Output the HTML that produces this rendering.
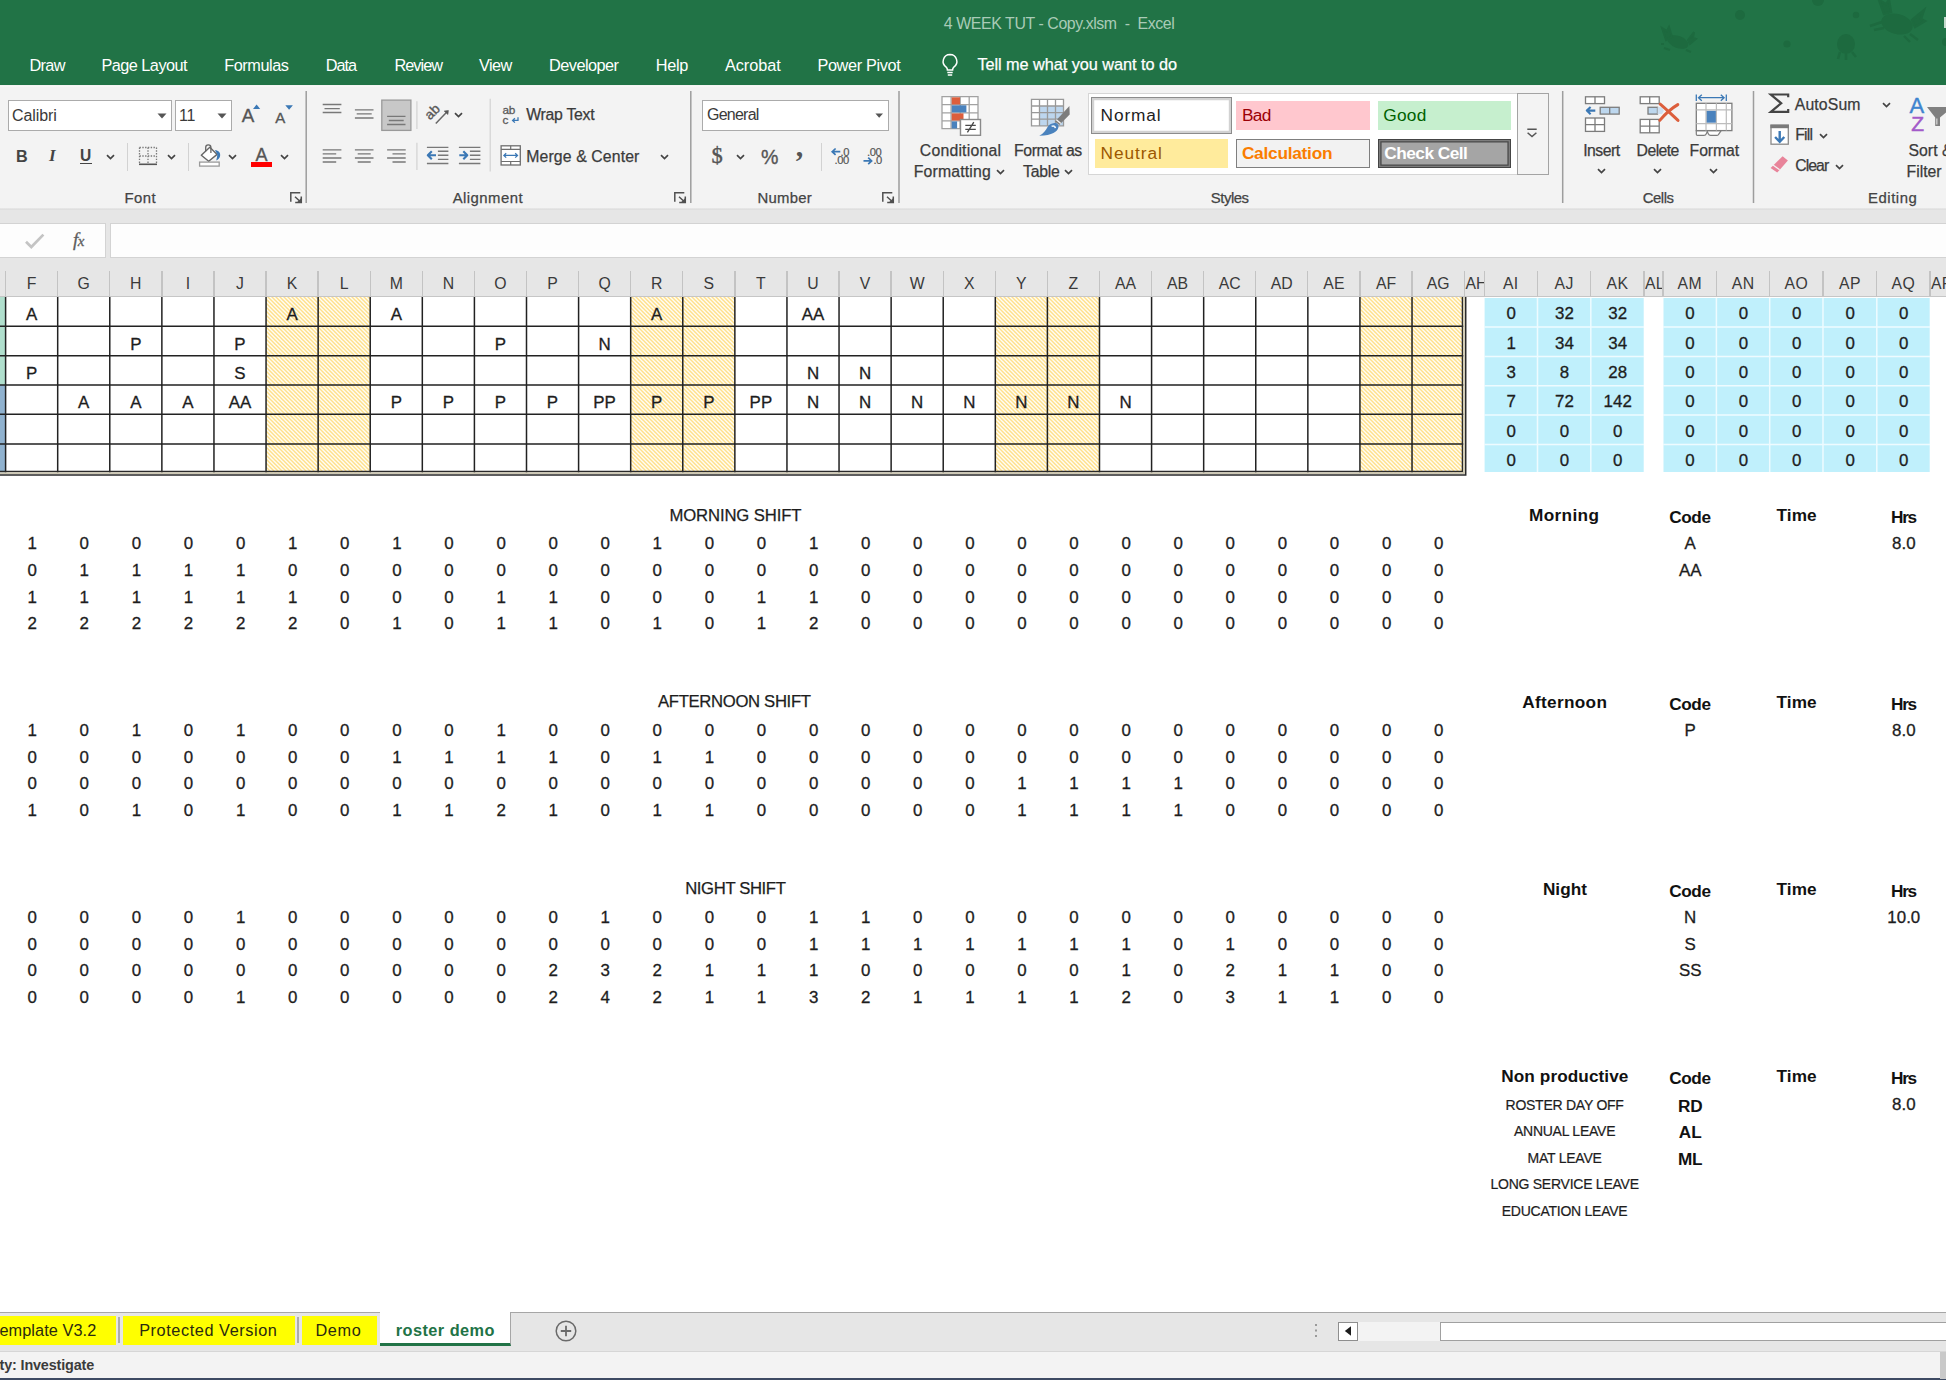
<!DOCTYPE html>
<html lang="en"><head><meta charset="utf-8"><title>4 WEEK TUT - Copy.xlsm - Excel</title>
<style>
*{box-sizing:border-box;margin:0;padding:0}
html,body{width:1946px;height:1380px;overflow:hidden;background:#fff}
body{position:relative;font-family:"Liberation Sans",sans-serif;color:#1c1c1c}
div,i,span,svg{position:absolute}
i{display:block}
.t{width:200px;height:24px;line-height:24px;text-align:center;white-space:nowrap}
.c{font-size:16.9px;color:#1d1d1d;-webkit-text-stroke:0.3px #1d1d1d}
.b{font-size:17.2px;font-weight:bold;color:#111;letter-spacing:-0.1px}
.s{font-size:14px;color:#1d1d1d;letter-spacing:-0.25px;-webkit-text-stroke:0.2px #1d1d1d}
.h{font-size:15.8px;color:#3a3a3a}
/* chrome */
#title{left:0;top:0;width:1946px;height:85px;background:#217346}
#ribbon{left:0;top:85px;width:1946px;height:123.5px;background:#f3f3f3}
#below{left:0;top:208.5px;width:1946px;height:88.5px;background:#e6e6e6}
#colhdr{left:0;top:0;width:1946px;height:297px}
.hs{width:1.4px;top:271px;height:25px;background:#c3c3c3}
.hatch{background:repeating-linear-gradient(45deg,#ffe291 0,#ffe291 1.3px,#fffdf4 1.3px,#fffdf4 2.83px)}
.vl{width:1.5px;background:#262626}
.hl{height:1.5px;background:#262626}
#dbl{border-right:4.8px double #2b2b2b;border-bottom:4.8px double #2b2b2b;background:transparent}
.bl{background:#c0f0fc}
.m{top:53px;height:24px;line-height:24px;font-size:16.2px;color:#fff;white-space:nowrap;letter-spacing:-0.15px}
.r{font-size:15.6px;color:#3b3b3b;white-space:nowrap;line-height:20px;height:20px;letter-spacing:-0.1px}
.gl{font-size:14.8px;color:#444;white-space:nowrap;line-height:20px;height:20px;top:187.5px;width:120px;text-align:center}
.gs{width:1.4px;top:91px;height:112px;background:#b5b5b5}
.ss{width:1.2px;background:#d2d2d2}
</style></head><body>

<div id="title">
<svg width="360" height="85" viewBox="0 0 360 85" style="left:1600px;top:0" fill="#1d6a3f">
 <circle cx="140" cy="15" r="5"/><circle cx="218" cy="0" r="6"/><circle cx="187" cy="44" r="3.6"/><circle cx="256" cy="15" r="3.2"/>
 <ellipse cx="78" cy="42" rx="11" ry="6" transform="rotate(20 78 42)"/><path d="M66 40l-4-12 5 3 2-4 3 10zM88 40l6-8-1 6 3 1-6 5zM64 44l-3 0M70 50l-6-2M86 50l5 2" stroke="#1d6a3f" stroke-width="2"/>
 <ellipse cx="246" cy="44" rx="9" ry="10"/><path d="M240 52l-2 7M246 54v6M252 52l4 5" stroke="#1d6a3f" stroke-width="2.5" fill="none"/>
 <ellipse cx="297" cy="24" rx="16" ry="10" transform="rotate(15 297 24)"/><path d="M284 14l-5-14 7 4 3-4 2 12zM312 20l12-10-3 9 4 2-10 6zM282 22l-12 4M284 28l-10 2M310 34l8 6M304 36l6 6" stroke="#1d6a3f" stroke-width="2.4"/>
 <circle cx="346" cy="42" r="4"/>
</svg>
<div style="left:1944px;top:17px;width:2px;height:11px;background:#c3d8cb"></div>
<div style="left:943.8px;top:12.0px;height:24px;line-height:24px;white-space:pre;font-size:15.9px;font-weight:normal;color:#a9cbb7;letter-spacing:-0.41px;">4 WEEK TUT - Copy.xlsm  -  Excel</div>
<div style="left:29.5px;top:52.8px;height:24px;line-height:24px;white-space:pre;font-size:16.3px;font-weight:normal;color:#fff;letter-spacing:-0.69px;">Draw</div>
<div style="left:101.5px;top:52.8px;height:24px;line-height:24px;white-space:pre;font-size:16.3px;font-weight:normal;color:#fff;letter-spacing:-0.54px;">Page Layout</div>
<div style="left:224.3px;top:52.8px;height:24px;line-height:24px;white-space:pre;font-size:16.3px;font-weight:normal;color:#fff;letter-spacing:-0.47px;">Formulas</div>
<div style="left:325.8px;top:52.8px;height:24px;line-height:24px;white-space:pre;font-size:16.3px;font-weight:normal;color:#fff;letter-spacing:-1.06px;">Data</div>
<div style="left:394.4px;top:52.8px;height:24px;line-height:24px;white-space:pre;font-size:16.3px;font-weight:normal;color:#fff;letter-spacing:-0.93px;">Review</div>
<div style="left:479.0px;top:52.8px;height:24px;line-height:24px;white-space:pre;font-size:16.3px;font-weight:normal;color:#fff;letter-spacing:-0.55px;">View</div>
<div style="left:549.1px;top:52.8px;height:24px;line-height:24px;white-space:pre;font-size:16.3px;font-weight:normal;color:#fff;letter-spacing:-0.55px;">Developer</div>
<div style="left:655.8px;top:52.8px;height:24px;line-height:24px;white-space:pre;font-size:16.3px;font-weight:normal;color:#fff;letter-spacing:-0.30px;">Help</div>
<div style="left:724.9px;top:52.8px;height:24px;line-height:24px;white-space:pre;font-size:16.3px;font-weight:normal;color:#fff;letter-spacing:-0.03px;">Acrobat</div>
<div style="left:817.4px;top:52.8px;height:24px;line-height:24px;white-space:pre;font-size:16.3px;font-weight:normal;color:#fff;letter-spacing:-0.35px;">Power Pivot</div>
<div style="left:977.4px;top:52.3px;height:24px;line-height:24px;white-space:pre;font-size:16.3px;font-weight:normal;color:#fff;letter-spacing:-0.05px;-webkit-text-stroke:0.25px #fff;">Tell me what you want to do</div>
<svg width="22" height="26" viewBox="0 0 22 26" style="left:938.900px;top:52.200px" fill="none" stroke="#fff" stroke-width="1.5"><path d="M11 2.500a6.900 6.900 0 0 0-3.800 12.600c.9.700 1.200 1.600 1.200 2.800h5.200c0-1.200.3-2.100 1.200-2.800A6.900 6.900 0 0 0 11 2.500z"/><path d="M8.300 20.400h5.400M8.800 23h4.400"/></svg>
</div>

<div id="ribbon"></div>
<div style="left:0;top:85px;width:1946px;height:2.200px;background:linear-gradient(#e8efea,#fbf8f9 45%,#f6f5f5)"></div>
<div id="below"></div>

<!-- ============ FONT GROUP ============ -->
<div style="left:7.5px;top:100px;width:164.5px;height:30.5px;background:#fff;border:1.4px solid #ababab"></div>
<div class="r" style="left:12px;top:105.5px;font-size:16px;color:#3a3a3a">Calibri</div>
<svg width="10" height="6" style="left:157px;top:112.5px"><path d="M0.500 0.500h9l-4.500 5z" fill="#555"/></svg>
<div style="left:174.500px;top:100px;width:57.5px;height:30.5px;background:#fff;border:1.4px solid #ababab"></div>
<div class="r" style="left:179px;top:105.5px;font-size:16px;color:#3a3a3a">11</div>
<svg width="10" height="6" style="left:217px;top:112.5px"><path d="M0.500 0.500h9l-4.500 5z" fill="#555"/></svg>

<svg width="0" height="0" style="left:0;top:0"><defs>
<symbol id="chv" viewBox="0 0 9 6"><path d="M1 1.100L4.500 4.500L8 1.100" fill="none" stroke="#444" stroke-width="1.700"/></symbol>
<symbol id="dl" viewBox="0 0 13 12"><path d="M0.800 9.700V0.800H10.300M5 4.800L10.700 10M5.200 10.600H11.300V4.600" fill="none" stroke="#505050" stroke-width="1.500"/><path d="M11.300 10.600V6L6.800 10.600z" fill="#505050"/></symbol>
</defs></svg>
<div class="r" style="left:241.800px;top:103.800px;font-size:18.800px;line-height:24px;height:24px;color:#555;-webkit-text-stroke:0.35px #555">A</div>
<svg width="8" height="6" style="left:252.900px;top:104.200px"><path d="M0 5L3.600 0.500L7.200 5z" fill="#3b78b5"/></svg>
<div class="r" style="left:275.300px;top:105.800px;font-size:15px;line-height:24px;height:24px;color:#555;-webkit-text-stroke:0.35px #555">A</div>
<svg width="9" height="6" style="left:284.600px;top:104.800px"><path d="M0.300 0.300H7.900L4.100 4.700z" fill="#3b78b5"/></svg>
<!-- B I U -->
<div class="r" style="left:16px;top:144.200px;font-size:16.200px;font-weight:bold;line-height:24px;height:24px;color:#444">B</div>
<div class="r" style="left:49px;top:144px;font-size:17px;font-weight:bold;font-style:italic;font-family:'Liberation Serif',serif;line-height:24px;height:24px;color:#444">I</div>
<div class="r" style="left:80px;top:144.200px;font-size:15.600px;font-weight:bold;line-height:24px;height:24px;color:#444">U</div>
<i style="left:80.200px;top:162.900px;width:11.400px;height:1.500px;background:#444"></i>
<svg width="9" height="6" style="left:105.500px;top:153.500px"><use href="#chv"/></svg>
<i class="ss" style="left:126.500px;top:142.500px;height:28px"></i>
<!-- borders -->
<svg width="20" height="20" viewBox="0 0 20 20" style="left:137.600px;top:145.500px" fill="none"><path d="M1.500 1.500H18.500M1.500 10H18.500M1.500 1.500V18M10 1.500V18M18.500 1.500V18" stroke="#7a7a7a" stroke-width="1.300" stroke-dasharray="1.400 1.400"/><path d="M1 18.300H19" stroke="#555" stroke-width="1.600"/></svg>
<svg width="9" height="6" style="left:166.700px;top:153.500px"><use href="#chv"/></svg>
<i class="ss" style="left:188px;top:142.500px;height:28px"></i>
<!-- fill bucket -->
<svg width="26" height="26" viewBox="197 143 26 26" style="left:197px;top:143px" fill="none"><path d="M209.800 147.300L217.100 154.400L208.700 161.300L201.300 155.200z" fill="#fff" stroke="#666" stroke-width="1.400" stroke-linejoin="round"/><path d="M205.700 151.200V147.400a2.600 2.600 0 0 1 5.200 0V153" stroke="#666" stroke-width="1.300"/><path d="M214.900 150.100C218.700 150.400 220.700 153 220.100 156.100C219.700 158.100 218.200 159.700 216.200 160.500C216.900 158.300 217.300 156.300 217.300 154.500z" fill="#3b78b5"/><rect x="199.600" y="162.100" width="19.600" height="4" fill="#fff" stroke="#9a9a9a" stroke-width="1.300"/></svg>
<svg width="9" height="6" style="left:228.300px;top:153.500px"><use href="#chv"/></svg>
<!-- font colour -->
<div class="r" style="left:255.600px;top:142.600px;font-size:18px;line-height:24px;height:24px;color:#555;-webkit-text-stroke:0.35px #555">A</div>
<i style="left:250.500px;top:161.700px;width:21.500px;height:5.200px;background:#f00"></i>
<svg width="9" height="6" style="left:280.300px;top:153.500px"><use href="#chv"/></svg>
<svg width="13" height="12" style="left:289.600px;top:191.500px"><use href="#dl"/></svg>
<!-- ============ ALIGNMENT GROUP ============ -->
<svg width="400" height="124" viewBox="300 85 400 124" style="left:300px;top:85px" fill="none">
<rect x="381.800" y="100.100" width="29.100" height="30.300" fill="#c8c8c8" stroke="#9a9a9a" stroke-width="1.300"/>
<path stroke="#787878" stroke-width="1.400" d="M322.700 104.500H341.400M324.500 108.600H339.800M322.700 112.500H341.400
M354.900 109.900H373.500M356.700 113.900H371.700M354.900 118H373.500
M387.100 116.400H405.500M388.800 120.500H403.700M387.100 124.500H405.500
M322.700 149.900H341.400M322.700 153.900H336.200M322.700 158H341.400M322.700 162H336.200
M354.900 149.900H373.500M357.700 153.900H370.700M354.900 158H373.500M357.700 162H370.700
M387.100 149.900H405.700M392.500 153.900H405.700M387.100 158H405.700M392.500 162H405.700
M426.900 147.400H448.400M437.900 151.300H448.400M437.900 155.300H448.400M437.900 159.400H448.400M426.900 163.500H448.400
M458.900 147.400H480.400M469.900 151.300H480.400M469.900 155.300H480.400M469.900 159.400H480.400M458.900 163.500H480.400"/>
<path stroke="#d2d2d2" stroke-width="1.200" d="M416.900 101.300V129.100M416.900 142.800V170.100M490.200 98.800V171.600"/>
<path stroke="#3b78b5" stroke-width="2.100" d="M428.300 155.300H436M431.800 151.300L427.800 155.300L431.800 159.300M459.300 155.300H467M463.300 151.300L467.300 155.300L463.300 159.300" stroke-linejoin="round"/>
<!-- orientation -->
<path stroke="#666" stroke-width="1.500" d="M435.800 123.400L446.600 112.300"/><path d="M444.200 111.100L448.400 110.500L447.900 114.500z" fill="#555" stroke="#555" stroke-width="0.600"/>
<text transform="translate(430.100 120.400) rotate(-45)" font-family="Liberation Sans, sans-serif" font-size="13.600" fill="#5a5a5a" stroke="#5a5a5a" stroke-width="0.350">ab</text>
<!-- wrap text icon -->
<text x="502.600" y="113.800" font-family="Liberation Sans, sans-serif" font-size="11.800" fill="#5a5a5a" stroke="#5a5a5a" stroke-width="0.300" letter-spacing="-0.300">ab</text>
<text x="502.600" y="123.700" font-family="Liberation Sans, sans-serif" font-size="11.800" fill="#5a5a5a" stroke="#5a5a5a" stroke-width="0.300">c</text>
<path stroke="#3b78b5" stroke-width="1.300" d="M518 117.300V120.400H512.800M514.900 118.200L512.600 120.400L514.900 122.600"/>
<!-- merge icon -->
<rect x="501.100" y="145.800" width="19.200" height="19.200" fill="#fff" stroke="#6e6e6e" stroke-width="1.300"/>
<path stroke="#6e6e6e" stroke-width="1.200" d="M501.100 149.300H520.300M501.100 161.500H520.300M510.700 145.800V149.300M510.700 161.500V165"/>
<path stroke="#3b78b5" stroke-width="1.300" d="M504 155.400H517.400M506.200 153.200L503.900 155.400L506.200 157.600M515.200 153.200L517.500 155.400L515.200 157.600"/>
</svg>
<svg width="9" height="6" style="left:454px;top:112.400px"><use href="#chv"/></svg>
<div style="left:526.2px;top:103.3px;height:24px;line-height:24px;white-space:pre;font-size:15.8px;font-weight:normal;color:#3b3b3b;letter-spacing:-0.26px;-webkit-text-stroke:0.25px #3b3b3b;">Wrap Text</div>
<div style="left:526.2px;top:144.8px;height:24px;line-height:24px;white-space:pre;font-size:15.8px;font-weight:normal;color:#3b3b3b;letter-spacing:0.13px;-webkit-text-stroke:0.25px #3b3b3b;">Merge &amp; Center</div>
<svg width="9" height="6" style="left:659.600px;top:154.200px"><use href="#chv"/></svg>
<svg width="13" height="12" style="left:674.300px;top:191.500px"><use href="#dl"/></svg>
<!-- ============ NUMBER GROUP ============ -->
<div style="left:701.800px;top:100px;width:187.500px;height:30.500px;background:#fff;border:1.400px solid #ababab"></div>
<div style="left:707.0px;top:103.3px;height:24px;line-height:24px;white-space:pre;font-size:16.0px;font-weight:normal;color:#3a3a3a;letter-spacing:-0.76px;">General</div>
<svg width="10" height="6" style="left:874.600px;top:112.800px"><path d="M0.400 0.400h7.600l-3.800 4.300z" fill="#555"/></svg>
<div class="r" style="left:711.400px;top:141.600px;font-size:22.500px;line-height:28px;height:28px;color:#555;font-family:'Liberation Serif',serif;-webkit-text-stroke:0.4px #555">$</div>
<svg width="9" height="6" style="left:735.500px;top:153.500px"><use href="#chv"/></svg>
<div class="r" style="left:761px;top:142.600px;font-size:19.600px;line-height:28px;height:28px;color:#555;letter-spacing:-0.5px;-webkit-text-stroke:0.35px #555">%</div>
<div class="r" style="left:795.800px;top:127.800px;font-size:30px;line-height:36px;height:36px;color:#555;font-family:'Liberation Serif',serif;font-weight:bold">,</div>
<i class="ss" style="left:821px;top:143px;height:27.500px"></i>
<svg width="60" height="24" viewBox="828 144 60 24" style="left:828px;top:144px" font-family="Liberation Sans, sans-serif" font-size="11.200" fill="#555" stroke="#555" stroke-width="0.200">
<text x="840.600" y="155.600" letter-spacing="-0.400">.0</text><text x="834.600" y="164.300" letter-spacing="-0.400">.00</text>
<text x="867" y="155.600" letter-spacing="-0.400">.00</text><text x="873.400" y="164.300" letter-spacing="-0.400">.0</text>
<path d="M832.300 151.700H840.300M835.600 148.500L832.200 151.700L835.600 154.900M863.500 160.900H871.500M868.200 157.700L871.600 160.900L868.200 164.100" fill="none" stroke="#3b78b5" stroke-width="1.700"/>
</svg>
<svg width="13" height="12" style="left:882.400px;top:191.500px"><use href="#dl"/></svg>
<!-- ============ CONDITIONAL FORMATTING / FORMAT AS TABLE ============ -->
<svg width="160" height="46" viewBox="936 92 160 46" style="left:936px;top:92px" fill="none">
<rect x="942" y="96.600" width="36" height="32" fill="#fff"/>
<path stroke="#a2a2a2" stroke-width="1.300" d="M942 96.600H978V128.600H942zM942 104.700H978M942 112.800H978M942 120.800H978M951.100 96.600V128.600M960.200 96.600V128.600M969.200 96.600V128.600"/>
<rect x="951.700" y="97.300" width="8.300" height="7.100" fill="#dc5e3c"/><rect x="951.700" y="105.300" width="14.700" height="7.100" fill="#4a82bd"/>
<rect x="951.700" y="113.400" width="11.800" height="7.100" fill="#dc5e3c"/><rect x="951.700" y="121.400" width="5.400" height="7.100" fill="#4a82bd"/>
<rect x="960.500" y="119.500" width="20" height="15.800" fill="#fff" stroke="#8a8a8a" stroke-width="1.400"/>
<path stroke="#4a4a4a" stroke-width="1.300" d="M965.300 125.300H975.800M965.300 129.300H975.800M973.800 122.200L967.400 132.400"/>
<!-- table -->
<rect x="1031.500" y="99.400" width="32" height="26.400" fill="#fff"/>
<rect x="1039.500" y="106" width="24" height="19.800" fill="#bdd6ee"/>
<path stroke="#999" stroke-width="1.300" d="M1031.500 99.400H1063.500V125.800H1031.500zM1031.500 106H1063.500M1031.500 112.600H1063.500M1031.500 119.200H1063.500M1039.500 99.400V125.800M1047.500 99.400V125.800M1055.500 99.400V125.800"/>
<path d="M1069.400 106L1069.700 114.400L1059.300 125L1055.100 121.500z" fill="#7c7c7c"/>
<path d="M1056.400 119.800L1060.800 123.600" stroke="#f3f3f3" stroke-width="1.300"/>
<path d="M1053.400 123.200C1056.400 122.200 1059.200 124.200 1058.400 127.400C1057.400 131.400 1052.600 135.400 1039.300 135.800C1043.400 133.600 1046 130 1047.400 127.200C1048.600 124.800 1050.800 123.800 1053.400 123.200z" fill="#4a82bd"/>
<path d="M1051.600 126.400c1.800-1 3.600-.2 3.800 1.800" stroke="#f1f6fb" stroke-width="1.600" fill="none"/>
</svg>
<div style="left:919.8px;top:138.6px;height:24px;line-height:24px;white-space:pre;font-size:15.8px;font-weight:normal;color:#3b3b3b;letter-spacing:0.21px;-webkit-text-stroke:0.25px #3b3b3b;">Conditional</div>
<div style="left:913.8px;top:159.8px;height:24px;line-height:24px;white-space:pre;font-size:15.8px;font-weight:normal;color:#3b3b3b;letter-spacing:0.16px;-webkit-text-stroke:0.25px #3b3b3b;">Formatting</div>
<svg width="9" height="6" style="left:996.200px;top:168.700px"><use href="#chv"/></svg>
<div style="left:1013.9px;top:138.6px;height:24px;line-height:24px;white-space:pre;font-size:15.8px;font-weight:normal;color:#3b3b3b;letter-spacing:-0.34px;-webkit-text-stroke:0.25px #3b3b3b;">Format as</div>
<div style="left:1023.1px;top:159.8px;height:24px;line-height:24px;white-space:pre;font-size:15.8px;font-weight:normal;color:#3b3b3b;letter-spacing:-0.29px;-webkit-text-stroke:0.25px #3b3b3b;">Table</div>
<svg width="9" height="6" style="left:1064.200px;top:168.700px"><use href="#chv"/></svg>
<!-- ============ STYLES GALLERY ============ -->
<div style="left:1088.200px;top:93.300px;width:430px;height:82.200px;background:#fff;border:1.200px solid #d6d6d6"></div>
<div style="left:1517.200px;top:93.300px;width:31.400px;height:82.200px;background:#f3f3f3;border:1.400px solid #a3a3a3"></div>
<svg width="12" height="10" viewBox="0 0 12 10" style="left:1526px;top:128px" fill="none" stroke="#555" stroke-width="1.500"><path d="M1.300 1.300H10.700M1.600 4.800L6 8.600L10.400 4.800"/></svg>
<div style="left:1090.800px;top:97.400px;width:141.400px;height:36.800px;background:#fff;border:1.200px solid #8c8c8c;box-shadow:inset 0 0 0 2.200px #d2d2d2"></div>
<div style="left:1236px;top:101.200px;width:133.800px;height:29.100px;background:#ffc7ce"></div>
<div style="left:1377.800px;top:101.200px;width:133.400px;height:29.100px;background:#c6efce"></div>
<div style="left:1094.700px;top:138.900px;width:133.700px;height:28.900px;background:#ffeb9c"></div>
<div style="left:1236px;top:138.700px;width:133.800px;height:29.200px;background:#f2f2f2;border:1.300px solid #7f7f7f"></div>
<div style="left:1377.800px;top:138.700px;width:133.400px;height:29.200px;background:#a5a5a5;border:1.300px solid #444;box-shadow:inset 0 0 0 1.300px #7d7d7d, inset 0 0 0 2.600px #4a4a4a"></div>
<div style="left:1100.6px;top:103.0px;height:24px;line-height:24px;white-space:pre;font-size:17.3px;font-weight:normal;color:#1e1e1e;letter-spacing:0.86px;">Normal</div>
<div style="left:1242.1px;top:103.0px;height:24px;line-height:24px;white-space:pre;font-size:17.3px;font-weight:normal;color:#9c0006;letter-spacing:-0.75px;">Bad</div>
<div style="left:1383.2px;top:103.0px;height:24px;line-height:24px;white-space:pre;font-size:17.3px;font-weight:normal;color:#006100;letter-spacing:0.30px;">Good</div>
<div style="left:1100.6px;top:140.6px;height:24px;line-height:24px;white-space:pre;font-size:17.3px;font-weight:normal;color:#9c5700;letter-spacing:0.93px;">Neutral</div>
<div style="left:1241.9px;top:140.6px;height:24px;line-height:24px;white-space:pre;font-size:17.3px;font-weight:bold;color:#fa7d00;letter-spacing:-0.25px;">Calculation</div>
<div style="left:1384.3px;top:140.6px;height:24px;line-height:24px;white-space:pre;font-size:17.3px;font-weight:bold;color:#fff;letter-spacing:-0.54px;">Check Cell</div>
<!-- ============ CELLS GROUP ============ -->
<svg width="190" height="50" viewBox="1570 90 190 50" style="left:1570px;top:90px" fill="none">
<g stroke="#7c7c7c" stroke-width="1.300" fill="#fff">
<rect x="1585.500" y="96.800" width="19" height="6.800"/><path d="M1595 96.800V103.600"/>
<rect x="1585.500" y="118" width="19" height="13.400"/><path d="M1595 118V131.400M1585.500 124.700H1604.500"/>
<rect x="1600.200" y="107.300" width="19" height="6.800" fill="#bdd7ee"/><path d="M1609.700 107.300V114.100"/>
<rect x="1640.200" y="96.800" width="19" height="6.800"/><path d="M1649.700 96.800V103.600"/>
<rect x="1640.200" y="119.400" width="19" height="13.400"/><path d="M1649.700 119.400V132.800M1640.200 126.100H1659.200"/>
<rect x="1648" y="107.300" width="9.500" height="6.800" fill="#bdd7ee"/>
</g>
<path d="M1657.500 107.300H1662l1.800 3.400l-1.800 3.400H1657.500z" fill="#cfe0f1"/>
<path d="M1587 110.600H1595.300M1590.600 107L1586.800 110.600L1590.600 114.200" stroke="#3b78b5" stroke-width="2.100" stroke-linejoin="round"/>
<path d="M1660.200 104.200C1666 109 1672 115 1678 120.400M1677.800 104.600C1671 108.600 1664.600 114.600 1659.800 120.400" stroke="#dc5e3c" stroke-width="3" stroke-linecap="round"/>
<!-- format -->
<path d="M1696.300 130.600v3.600q0 1.200 1.200 1.200h6.500q1.600 0 2.300-1.600l1-2.200l1 2.200q.7 1.600 2.300 1.600h6.200q1 0 1.600-.8l2.800-4z" fill="#fff" stroke="#7c7c7c" stroke-width="1.200"/>
<rect x="1696.300" y="103.300" width="35.600" height="27.300" fill="#fff" stroke="#7c7c7c" stroke-width="1.300"/>
<rect x="1706.300" y="110.700" width="10" height="12" fill="#4a82bd"/>
<path d="M1696.300 109.800H1731.900M1696.300 123.600H1731.900M1706 103.300V130.600M1716.400 103.300V130.600M1726.300 103.300V130.600" stroke="#bdbdbd" stroke-width="1.200"/>
<path d="M1696.300 94.400V101M1726.300 94.400V101M1698.600 97.700H1724M1701.800 94.700L1698.500 97.700L1701.800 100.700M1720.800 94.700L1724.100 97.700L1720.800 100.700" stroke="#3b78b5" stroke-width="1.300"/>
</svg>
<div style="left:1583.2px;top:138.5px;height:24px;line-height:24px;white-space:pre;font-size:15.8px;font-weight:normal;color:#3b3b3b;letter-spacing:-0.50px;-webkit-text-stroke:0.25px #3b3b3b;">Insert</div>
<div style="left:1636.6px;top:138.5px;height:24px;line-height:24px;white-space:pre;font-size:15.8px;font-weight:normal;color:#3b3b3b;letter-spacing:-0.57px;-webkit-text-stroke:0.25px #3b3b3b;">Delete</div>
<div style="left:1689.6px;top:138.5px;height:24px;line-height:24px;white-space:pre;font-size:15.8px;font-weight:normal;color:#3b3b3b;letter-spacing:-0.10px;-webkit-text-stroke:0.25px #3b3b3b;">Format</div>
<svg width="9" height="6" style="left:1597px;top:168.400px"><use href="#chv"/></svg>
<svg width="9" height="6" style="left:1652.900px;top:168.400px"><use href="#chv"/></svg>
<svg width="9" height="6" style="left:1709.100px;top:168.400px"><use href="#chv"/></svg>
<!-- ============ EDITING GROUP ============ -->
<svg width="190" height="90" viewBox="1756 90 190 90" style="left:1756px;top:90px" fill="none">
<path d="M1788.200 97.300V94.500H1770.800L1781.200 103.200L1770.800 111.900H1788.200V108.900" stroke="#444" stroke-width="2.200" stroke-linejoin="miter"/>
<rect x="1771" y="125.200" width="17.300" height="19" fill="#fff" stroke="#8a8a8a" stroke-width="1.300"/>
<rect x="1770.400" y="124.600" width="18.500" height="3.600" fill="#7a7a7a"/>
<path d="M1779.700 131V141.400M1775.100 137L1779.700 141.800L1784.300 137" stroke="#3b78b5" stroke-width="2.400"/>
<path d="M1782.600 156.200L1787.900 160.600L1777.200 172.600L1770.600 167.900z" fill="#e8849a"/>
<path d="M1773 165L1779.600 169.800" stroke="#f3f3f3" stroke-width="1.300"/>
<text x="1909.600" y="112.900" font-family="Liberation Sans, sans-serif" font-size="22" fill="#3e84cf" stroke="#3e84cf" stroke-width="0.400">A</text>
<text x="1911.200" y="131.300" font-family="Liberation Sans, sans-serif" font-size="21" fill="#a35ac9" stroke="#a35ac9" stroke-width="0.500">Z</text>
<path d="M1927 107H1950V109L1940 117.500V126H1935.200V117.500z" fill="#808080"/>
<path d="M1936.800 118.500V124.600" stroke="#c9c9c9" stroke-width="1.500"/>
</svg>
<div style="left:1794.8px;top:92.5px;height:24px;line-height:24px;white-space:pre;font-size:15.8px;font-weight:normal;color:#3b3b3b;letter-spacing:0.11px;-webkit-text-stroke:0.25px #3b3b3b;">AutoSum</div>
<svg width="9" height="6" style="left:1881.600px;top:101.800px"><use href="#chv"/></svg>
<div style="left:1795.2px;top:123.2px;height:24px;line-height:24px;white-space:pre;font-size:15.8px;font-weight:normal;color:#3b3b3b;letter-spacing:-0.75px;-webkit-text-stroke:0.25px #3b3b3b;">Fill</div>
<svg width="9" height="6" style="left:1818.900px;top:132.800px"><use href="#chv"/></svg>
<div style="left:1795.2px;top:154.2px;height:24px;line-height:24px;white-space:pre;font-size:15.8px;font-weight:normal;color:#3b3b3b;letter-spacing:-0.94px;-webkit-text-stroke:0.25px #3b3b3b;">Clear</div>
<svg width="9" height="6" style="left:1834.700px;top:163.600px"><use href="#chv"/></svg>
<div style="left:1908.5px;top:138.8px;height:24px;line-height:24px;white-space:pre;font-size:15.8px;font-weight:normal;color:#3b3b3b;letter-spacing:0.02px;-webkit-text-stroke:0.25px #3b3b3b;">Sort &amp;</div>
<div style="left:1906.6px;top:159.8px;height:24px;line-height:24px;white-space:pre;font-size:15.8px;font-weight:normal;color:#3b3b3b;letter-spacing:-0.02px;-webkit-text-stroke:0.25px #3b3b3b;">Filter</div>

<div style="left:124.6px;top:185.7px;height:24px;line-height:24px;white-space:pre;font-size:14.9px;font-weight:normal;color:#444;letter-spacing:0.40px;-webkit-text-stroke:0.25px #444;">Font</div>
<div style="left:452.7px;top:185.7px;height:24px;line-height:24px;white-space:pre;font-size:14.9px;font-weight:normal;color:#444;letter-spacing:0.46px;-webkit-text-stroke:0.25px #444;">Alignment</div>
<div style="left:757.6px;top:185.7px;height:24px;line-height:24px;white-space:pre;font-size:14.9px;font-weight:normal;color:#444;letter-spacing:0.21px;-webkit-text-stroke:0.25px #444;">Number</div>
<div style="left:1210.7px;top:185.7px;height:24px;line-height:24px;white-space:pre;font-size:14.9px;font-weight:normal;color:#444;letter-spacing:-0.44px;-webkit-text-stroke:0.25px #444;">Styles</div>
<div style="left:1642.7px;top:185.7px;height:24px;line-height:24px;white-space:pre;font-size:14.9px;font-weight:normal;color:#444;letter-spacing:-0.44px;-webkit-text-stroke:0.25px #444;">Cells</div>
<div style="left:1868.1px;top:185.7px;height:24px;line-height:24px;white-space:pre;font-size:14.9px;font-weight:normal;color:#444;letter-spacing:0.52px;-webkit-text-stroke:0.25px #444;">Editing</div>
<svg width="1946" height="124" viewBox="0 85 1946 124" style="left:0;top:85px"><path d="M306.200 91V203M690.800 91V203M899 91V203M1562.700 91V203M1753.500 91V203" stroke="#9d9d9d" stroke-width="1.500" fill="none"/></svg>
<!-- formula bar -->
<div style="left:-5px;top:222.5px;width:111px;height:35.5px;background:#fdfdfd;border:1.3px solid #d3d3d3"></div>
<div style="left:110.3px;top:222.5px;width:1850px;height:35.5px;background:#fdfdfd;border:1.3px solid #d3d3d3"></div>
<svg width="22" height="18" viewBox="0 0 22 18" style="left:23.500px;top:231.500px" fill="none"><path d="M2 9.800L7.300 15L19.400 2.600" stroke="#c4c4c4" stroke-width="2.700"/></svg>
<div style="left:73px;top:227px;height:26px;line-height:26px;font-family:'Liberation Serif',serif;font-style:italic;font-size:19px;color:#5e5e5e;white-space:nowrap;letter-spacing:-0.5px;-webkit-text-stroke:0.3px #5e5e5e">f<span style="position:static;font-size:15px">x</span></div>
<div style="left:0;top:296px;width:1946px;height:1.3px;background:#c6c6c6"></div>
<div style="left:0;top:208px;width:1946px;height:2px;background:linear-gradient(#e9e9e9,#dcdcdc)"></div>

<div id="colhdr">
<i class="hs" style="left:4.9px"></i>
<div class="t h" style="left:-68.4px;top:272.2px;">F</div>
<i class="hs" style="left:57.0px"></i>
<div class="t h" style="left:-16.3px;top:272.2px;">G</div>
<i class="hs" style="left:109.1px"></i>
<div class="t h" style="left:35.8px;top:272.2px;">H</div>
<i class="hs" style="left:161.2px"></i>
<div class="t h" style="left:87.9px;top:272.2px;">I</div>
<i class="hs" style="left:213.3px"></i>
<div class="t h" style="left:140.0px;top:272.2px;">J</div>
<i class="hs" style="left:265.4px"></i>
<div class="t h" style="left:192.1px;top:272.2px;">K</div>
<i class="hs" style="left:317.4px"></i>
<div class="t h" style="left:244.2px;top:272.2px;">L</div>
<i class="hs" style="left:369.5px"></i>
<div class="t h" style="left:296.3px;top:272.2px;">M</div>
<i class="hs" style="left:421.6px"></i>
<div class="t h" style="left:348.4px;top:272.2px;">N</div>
<i class="hs" style="left:473.7px"></i>
<div class="t h" style="left:400.5px;top:272.2px;">O</div>
<i class="hs" style="left:525.8px"></i>
<div class="t h" style="left:452.5px;top:272.2px;">P</div>
<i class="hs" style="left:577.9px"></i>
<div class="t h" style="left:504.6px;top:272.2px;">Q</div>
<i class="hs" style="left:630.0px"></i>
<div class="t h" style="left:556.7px;top:272.2px;">R</div>
<i class="hs" style="left:682.1px"></i>
<div class="t h" style="left:608.8px;top:272.2px;">S</div>
<i class="hs" style="left:734.2px"></i>
<div class="t h" style="left:660.9px;top:272.2px;">T</div>
<i class="hs" style="left:786.2px"></i>
<div class="t h" style="left:713.0px;top:272.2px;">U</div>
<i class="hs" style="left:838.3px"></i>
<div class="t h" style="left:765.1px;top:272.2px;">V</div>
<i class="hs" style="left:890.4px"></i>
<div class="t h" style="left:817.2px;top:272.2px;">W</div>
<i class="hs" style="left:942.5px"></i>
<div class="t h" style="left:869.3px;top:272.2px;">X</div>
<i class="hs" style="left:994.6px"></i>
<div class="t h" style="left:921.4px;top:272.2px;">Y</div>
<i class="hs" style="left:1046.7px"></i>
<div class="t h" style="left:973.4px;top:272.2px;">Z</div>
<i class="hs" style="left:1098.8px"></i>
<div class="t h" style="left:1025.5px;top:272.2px;">AA</div>
<i class="hs" style="left:1150.9px"></i>
<div class="t h" style="left:1077.6px;top:272.2px;">AB</div>
<i class="hs" style="left:1203.0px"></i>
<div class="t h" style="left:1129.7px;top:272.2px;">AC</div>
<i class="hs" style="left:1255.1px"></i>
<div class="t h" style="left:1181.8px;top:272.2px;">AD</div>
<i class="hs" style="left:1307.1px"></i>
<div class="t h" style="left:1233.9px;top:272.2px;">AE</div>
<i class="hs" style="left:1359.2px"></i>
<div class="t h" style="left:1286.0px;top:272.2px;">AF</div>
<i class="hs" style="left:1411.3px"></i>
<div class="t h" style="left:1338.1px;top:272.2px;">AG</div>
<i class="hs" style="left:1463.7px"></i>
<div class="t h" style="left:1465.4px;top:272.2px;width:18.3px;overflow:hidden;text-align:left;white-space:nowrap">AH</div>
<i class="hs" style="left:1483.5px"></i>
<div class="t h" style="left:1410.8px;top:272.2px;letter-spacing:0.4px">AI</div>
<i class="hs" style="left:1536.8px"></i>
<div class="t h" style="left:1464.2px;top:272.2px;letter-spacing:0.4px">AJ</div>
<i class="hs" style="left:1590.1px"></i>
<div class="t h" style="left:1517.4px;top:272.2px;letter-spacing:0.4px">AK</div>
<i class="hs" style="left:1643.4px"></i>
<div class="t h" style="left:1645.1px;top:272.2px;width:17.5px;overflow:hidden;text-align:left;white-space:nowrap">AL</div>
<i class="hs" style="left:1662.4px"></i>
<div class="t h" style="left:1589.8px;top:272.2px;letter-spacing:0.4px">AM</div>
<i class="hs" style="left:1715.7px"></i>
<div class="t h" style="left:1643.1px;top:272.2px;letter-spacing:0.4px">AN</div>
<i class="hs" style="left:1769.0px"></i>
<div class="t h" style="left:1696.3px;top:272.2px;letter-spacing:0.4px">AO</div>
<i class="hs" style="left:1822.3px"></i>
<div class="t h" style="left:1749.9px;top:272.2px;letter-spacing:0.4px">AP</div>
<i class="hs" style="left:1876.1px"></i>
<div class="t h" style="left:1803.4px;top:272.2px;letter-spacing:0.4px">AQ</div>
<i class="hs" style="left:1929.4px"></i>
<div class="t h" style="left:1931.1px;top:272.2px;width:30px;text-align:left">AR</div>
</div>
<div style="position:absolute;left:0;top:297.2px;width:5px;height:88.1px;background:#b0dfcd"></div>
<div style="position:absolute;left:0;top:385.3px;width:5px;height:87.9px;background:#90b2cf"></div>
<svg width="1480" height="176.0" viewBox="0 0 1480 176.0" style="left:0;top:297.2px"><defs><pattern id="hp" width="4" height="4" patternUnits="userSpaceOnUse"><rect width="4" height="4" fill="#fffdf5"/><path d="M-1 -1L5 5M-1 3L1 5M3 -1L5 1" stroke="#ffe08a" stroke-width="1.400"/></pattern></defs><rect x="266.1" y="0" width="52.1" height="176.0" fill="url(#hp)"/><rect x="318.1" y="0" width="52.1" height="176.0" fill="url(#hp)"/><rect x="630.7" y="0" width="52.1" height="176.0" fill="url(#hp)"/><rect x="682.8" y="0" width="52.1" height="176.0" fill="url(#hp)"/><rect x="995.3" y="0" width="52.1" height="176.0" fill="url(#hp)"/><rect x="1047.4" y="0" width="52.1" height="176.0" fill="url(#hp)"/><rect x="1359.9" y="0" width="52.1" height="176.0" fill="url(#hp)"/><rect x="1412.0" y="0" width="52.1" height="176.0" fill="url(#hp)"/></svg>
<svg width="1480" height="184.0" viewBox="0 0 1480 184.0" style="left:0;top:297.2px" stroke="#222" stroke-width="1.5" fill="none" shape-rendering="geometricPrecision"><path d="M5.60 0V176.0M57.69 0V176.0M109.78 0V176.0M161.87 0V176.0M213.96 0V176.0M266.05 0V176.0M318.14 0V176.0M370.23 0V176.0M422.32 0V176.0M474.41 0V176.0M526.50 0V176.0M578.59 0V176.0M630.68 0V176.0M682.77 0V176.0M734.86 0V176.0M786.95 0V176.0M839.04 0V176.0M891.13 0V176.0M943.22 0V176.0M995.31 0V176.0M1047.40 0V176.0M1099.49 0V176.0M1151.58 0V176.0M1203.67 0V176.0M1255.76 0V176.0M1307.85 0V176.0M1359.94 0V176.0M1412.03 0V176.0M0 29.20H1464.1M0 58.80H1464.1M0 88.10H1464.1M0 117.30H1464.1M0 146.90H1464.1"/><path d="M1462.42 0V174.50H0" stroke="#2a2a2a" stroke-width="1.4"/><path d="M1465.72 0V177.90H0" stroke="#2a2a2a" stroke-width="1.5"/><path d="M1464.07 0V176.20H0" stroke="#cdc8b4" stroke-width="1.7"/></svg>
<div class="t c" style="left:-68.4px;top:303.2px;">A</div>
<div class="t c" style="left:192.1px;top:303.2px;">A</div>
<div class="t c" style="left:296.3px;top:303.2px;">A</div>
<div class="t c" style="left:556.7px;top:303.2px;">A</div>
<div class="t c" style="left:713.0px;top:303.2px;">AA</div>
<div class="t c" style="left:35.8px;top:332.6px;">P</div>
<div class="t c" style="left:140.0px;top:332.6px;">P</div>
<div class="t c" style="left:400.5px;top:332.6px;">P</div>
<div class="t c" style="left:504.6px;top:332.6px;">N</div>
<div class="t c" style="left:-68.4px;top:362.0px;">P</div>
<div class="t c" style="left:140.0px;top:362.0px;">S</div>
<div class="t c" style="left:713.0px;top:362.0px;">N</div>
<div class="t c" style="left:765.1px;top:362.0px;">N</div>
<div class="t c" style="left:-16.3px;top:391.3px;">A</div>
<div class="t c" style="left:35.8px;top:391.3px;">A</div>
<div class="t c" style="left:87.9px;top:391.3px;">A</div>
<div class="t c" style="left:140.0px;top:391.3px;">AA</div>
<div class="t c" style="left:296.3px;top:391.3px;">P</div>
<div class="t c" style="left:348.4px;top:391.3px;">P</div>
<div class="t c" style="left:400.5px;top:391.3px;">P</div>
<div class="t c" style="left:452.5px;top:391.3px;">P</div>
<div class="t c" style="left:504.6px;top:391.3px;">PP</div>
<div class="t c" style="left:556.7px;top:391.3px;">P</div>
<div class="t c" style="left:608.8px;top:391.3px;">P</div>
<div class="t c" style="left:660.9px;top:391.3px;">PP</div>
<div class="t c" style="left:713.0px;top:391.3px;">N</div>
<div class="t c" style="left:765.1px;top:391.3px;">N</div>
<div class="t c" style="left:817.2px;top:391.3px;">N</div>
<div class="t c" style="left:869.3px;top:391.3px;">N</div>
<div class="t c" style="left:921.4px;top:391.3px;">N</div>
<div class="t c" style="left:973.4px;top:391.3px;">N</div>
<div class="t c" style="left:1025.5px;top:391.3px;">N</div>
<svg width="470" height="174.8" viewBox="1480 297.5 470 174.8" style="left:1480px;top:297.5px"><rect x="1484.6" y="297.5" width="159.1" height="174.8" fill="#c0f0fc"/><rect x="1663.5" y="297.5" width="266.2" height="174.8" fill="#c0f0fc"/><path d="M1537.5 297.5V472.3M1590.8 297.5V472.3M1716.4 297.5V472.3M1769.7 297.5V472.3M1823.0 297.5V472.3M1876.8 297.5V472.3M1484.2 326.4H1644.1M1663.1 326.4H1930.1M1484.2 356.0H1644.1M1663.1 356.0H1930.1M1484.2 385.3H1644.1M1663.1 385.3H1930.1M1484.2 414.5H1644.1M1663.1 414.5H1930.1M1484.2 444.1H1644.1M1663.1 444.1H1930.1" stroke="#eefbff" stroke-width="1.500" fill="none"/></svg>
<div class="t c" style="left:1411.1px;top:302.2px;">0</div>
<div class="t c" style="left:1411.1px;top:331.6px;">1</div>
<div class="t c" style="left:1411.1px;top:361.0px;">3</div>
<div class="t c" style="left:1411.1px;top:390.3px;">7</div>
<div class="t c" style="left:1411.1px;top:419.7px;">0</div>
<div class="t c" style="left:1411.1px;top:449.0px;">0</div>
<div class="t c" style="left:1464.5px;top:302.2px;">32</div>
<div class="t c" style="left:1464.5px;top:331.6px;">34</div>
<div class="t c" style="left:1464.5px;top:361.0px;">8</div>
<div class="t c" style="left:1464.5px;top:390.3px;">72</div>
<div class="t c" style="left:1464.5px;top:419.7px;">0</div>
<div class="t c" style="left:1464.5px;top:449.0px;">0</div>
<div class="t c" style="left:1517.7px;top:302.2px;">32</div>
<div class="t c" style="left:1517.7px;top:331.6px;">34</div>
<div class="t c" style="left:1517.7px;top:361.0px;">28</div>
<div class="t c" style="left:1517.7px;top:390.3px;">142</div>
<div class="t c" style="left:1517.7px;top:419.7px;">0</div>
<div class="t c" style="left:1517.7px;top:449.0px;">0</div>
<div class="t c" style="left:1590.0px;top:302.2px;">0</div>
<div class="t c" style="left:1590.0px;top:331.6px;">0</div>
<div class="t c" style="left:1590.0px;top:361.0px;">0</div>
<div class="t c" style="left:1590.0px;top:390.3px;">0</div>
<div class="t c" style="left:1590.0px;top:419.7px;">0</div>
<div class="t c" style="left:1590.0px;top:449.0px;">0</div>
<div class="t c" style="left:1643.4px;top:302.2px;">0</div>
<div class="t c" style="left:1643.4px;top:331.6px;">0</div>
<div class="t c" style="left:1643.4px;top:361.0px;">0</div>
<div class="t c" style="left:1643.4px;top:390.3px;">0</div>
<div class="t c" style="left:1643.4px;top:419.7px;">0</div>
<div class="t c" style="left:1643.4px;top:449.0px;">0</div>
<div class="t c" style="left:1696.6px;top:302.2px;">0</div>
<div class="t c" style="left:1696.6px;top:331.6px;">0</div>
<div class="t c" style="left:1696.6px;top:361.0px;">0</div>
<div class="t c" style="left:1696.6px;top:390.3px;">0</div>
<div class="t c" style="left:1696.6px;top:419.7px;">0</div>
<div class="t c" style="left:1696.6px;top:449.0px;">0</div>
<div class="t c" style="left:1750.2px;top:302.2px;">0</div>
<div class="t c" style="left:1750.2px;top:331.6px;">0</div>
<div class="t c" style="left:1750.2px;top:361.0px;">0</div>
<div class="t c" style="left:1750.2px;top:390.3px;">0</div>
<div class="t c" style="left:1750.2px;top:419.7px;">0</div>
<div class="t c" style="left:1750.2px;top:449.0px;">0</div>
<div class="t c" style="left:1803.7px;top:302.2px;">0</div>
<div class="t c" style="left:1803.7px;top:331.6px;">0</div>
<div class="t c" style="left:1803.7px;top:361.0px;">0</div>
<div class="t c" style="left:1803.7px;top:390.3px;">0</div>
<div class="t c" style="left:1803.7px;top:419.7px;">0</div>
<div class="t c" style="left:1803.7px;top:449.0px;">0</div>
<div style="left:669.4px;top:503.6px;height:24px;line-height:24px;white-space:pre;font-size:16.7px;font-weight:normal;color:#1d1d1d;letter-spacing:-0.12px;-webkit-text-stroke:0.25px #1d1d1d;">MORNING SHIFT</div>
<div class="t c" style="left:-67.8px;top:532.3px;">1</div>
<div class="t c" style="left:-15.7px;top:532.3px;">0</div>
<div class="t c" style="left:36.4px;top:532.3px;">0</div>
<div class="t c" style="left:88.5px;top:532.3px;">0</div>
<div class="t c" style="left:140.6px;top:532.3px;">0</div>
<div class="t c" style="left:192.7px;top:532.3px;">1</div>
<div class="t c" style="left:244.8px;top:532.3px;">0</div>
<div class="t c" style="left:296.9px;top:532.3px;">1</div>
<div class="t c" style="left:349.0px;top:532.3px;">0</div>
<div class="t c" style="left:401.1px;top:532.3px;">0</div>
<div class="t c" style="left:453.1px;top:532.3px;">0</div>
<div class="t c" style="left:505.2px;top:532.3px;">0</div>
<div class="t c" style="left:557.3px;top:532.3px;">1</div>
<div class="t c" style="left:609.4px;top:532.3px;">0</div>
<div class="t c" style="left:661.5px;top:532.3px;">0</div>
<div class="t c" style="left:713.6px;top:532.3px;">1</div>
<div class="t c" style="left:765.7px;top:532.3px;">0</div>
<div class="t c" style="left:817.8px;top:532.3px;">0</div>
<div class="t c" style="left:869.9px;top:532.3px;">0</div>
<div class="t c" style="left:922.0px;top:532.3px;">0</div>
<div class="t c" style="left:974.0px;top:532.3px;">0</div>
<div class="t c" style="left:1026.1px;top:532.3px;">0</div>
<div class="t c" style="left:1078.2px;top:532.3px;">0</div>
<div class="t c" style="left:1130.3px;top:532.3px;">0</div>
<div class="t c" style="left:1182.4px;top:532.3px;">0</div>
<div class="t c" style="left:1234.5px;top:532.3px;">0</div>
<div class="t c" style="left:1286.6px;top:532.3px;">0</div>
<div class="t c" style="left:1338.7px;top:532.3px;">0</div>
<div class="t c" style="left:-67.8px;top:558.9px;">0</div>
<div class="t c" style="left:-15.7px;top:558.9px;">1</div>
<div class="t c" style="left:36.4px;top:558.9px;">1</div>
<div class="t c" style="left:88.5px;top:558.9px;">1</div>
<div class="t c" style="left:140.6px;top:558.9px;">1</div>
<div class="t c" style="left:192.7px;top:558.9px;">0</div>
<div class="t c" style="left:244.8px;top:558.9px;">0</div>
<div class="t c" style="left:296.9px;top:558.9px;">0</div>
<div class="t c" style="left:349.0px;top:558.9px;">0</div>
<div class="t c" style="left:401.1px;top:558.9px;">0</div>
<div class="t c" style="left:453.1px;top:558.9px;">0</div>
<div class="t c" style="left:505.2px;top:558.9px;">0</div>
<div class="t c" style="left:557.3px;top:558.9px;">0</div>
<div class="t c" style="left:609.4px;top:558.9px;">0</div>
<div class="t c" style="left:661.5px;top:558.9px;">0</div>
<div class="t c" style="left:713.6px;top:558.9px;">0</div>
<div class="t c" style="left:765.7px;top:558.9px;">0</div>
<div class="t c" style="left:817.8px;top:558.9px;">0</div>
<div class="t c" style="left:869.9px;top:558.9px;">0</div>
<div class="t c" style="left:922.0px;top:558.9px;">0</div>
<div class="t c" style="left:974.0px;top:558.9px;">0</div>
<div class="t c" style="left:1026.1px;top:558.9px;">0</div>
<div class="t c" style="left:1078.2px;top:558.9px;">0</div>
<div class="t c" style="left:1130.3px;top:558.9px;">0</div>
<div class="t c" style="left:1182.4px;top:558.9px;">0</div>
<div class="t c" style="left:1234.5px;top:558.9px;">0</div>
<div class="t c" style="left:1286.6px;top:558.9px;">0</div>
<div class="t c" style="left:1338.7px;top:558.9px;">0</div>
<div class="t c" style="left:-67.8px;top:585.5px;">1</div>
<div class="t c" style="left:-15.7px;top:585.5px;">1</div>
<div class="t c" style="left:36.4px;top:585.5px;">1</div>
<div class="t c" style="left:88.5px;top:585.5px;">1</div>
<div class="t c" style="left:140.6px;top:585.5px;">1</div>
<div class="t c" style="left:192.7px;top:585.5px;">1</div>
<div class="t c" style="left:244.8px;top:585.5px;">0</div>
<div class="t c" style="left:296.9px;top:585.5px;">0</div>
<div class="t c" style="left:349.0px;top:585.5px;">0</div>
<div class="t c" style="left:401.1px;top:585.5px;">1</div>
<div class="t c" style="left:453.1px;top:585.5px;">1</div>
<div class="t c" style="left:505.2px;top:585.5px;">0</div>
<div class="t c" style="left:557.3px;top:585.5px;">0</div>
<div class="t c" style="left:609.4px;top:585.5px;">0</div>
<div class="t c" style="left:661.5px;top:585.5px;">1</div>
<div class="t c" style="left:713.6px;top:585.5px;">1</div>
<div class="t c" style="left:765.7px;top:585.5px;">0</div>
<div class="t c" style="left:817.8px;top:585.5px;">0</div>
<div class="t c" style="left:869.9px;top:585.5px;">0</div>
<div class="t c" style="left:922.0px;top:585.5px;">0</div>
<div class="t c" style="left:974.0px;top:585.5px;">0</div>
<div class="t c" style="left:1026.1px;top:585.5px;">0</div>
<div class="t c" style="left:1078.2px;top:585.5px;">0</div>
<div class="t c" style="left:1130.3px;top:585.5px;">0</div>
<div class="t c" style="left:1182.4px;top:585.5px;">0</div>
<div class="t c" style="left:1234.5px;top:585.5px;">0</div>
<div class="t c" style="left:1286.6px;top:585.5px;">0</div>
<div class="t c" style="left:1338.7px;top:585.5px;">0</div>
<div class="t c" style="left:-67.8px;top:612.1px;">2</div>
<div class="t c" style="left:-15.7px;top:612.1px;">2</div>
<div class="t c" style="left:36.4px;top:612.1px;">2</div>
<div class="t c" style="left:88.5px;top:612.1px;">2</div>
<div class="t c" style="left:140.6px;top:612.1px;">2</div>
<div class="t c" style="left:192.7px;top:612.1px;">2</div>
<div class="t c" style="left:244.8px;top:612.1px;">0</div>
<div class="t c" style="left:296.9px;top:612.1px;">1</div>
<div class="t c" style="left:349.0px;top:612.1px;">0</div>
<div class="t c" style="left:401.1px;top:612.1px;">1</div>
<div class="t c" style="left:453.1px;top:612.1px;">1</div>
<div class="t c" style="left:505.2px;top:612.1px;">0</div>
<div class="t c" style="left:557.3px;top:612.1px;">1</div>
<div class="t c" style="left:609.4px;top:612.1px;">0</div>
<div class="t c" style="left:661.5px;top:612.1px;">1</div>
<div class="t c" style="left:713.6px;top:612.1px;">2</div>
<div class="t c" style="left:765.7px;top:612.1px;">0</div>
<div class="t c" style="left:817.8px;top:612.1px;">0</div>
<div class="t c" style="left:869.9px;top:612.1px;">0</div>
<div class="t c" style="left:922.0px;top:612.1px;">0</div>
<div class="t c" style="left:974.0px;top:612.1px;">0</div>
<div class="t c" style="left:1026.1px;top:612.1px;">0</div>
<div class="t c" style="left:1078.2px;top:612.1px;">0</div>
<div class="t c" style="left:1130.3px;top:612.1px;">0</div>
<div class="t c" style="left:1182.4px;top:612.1px;">0</div>
<div class="t c" style="left:1234.5px;top:612.1px;">0</div>
<div class="t c" style="left:1286.6px;top:612.1px;">0</div>
<div class="t c" style="left:1338.7px;top:612.1px;">0</div>
<div style="left:658.0px;top:690.2px;height:24px;line-height:24px;white-space:pre;font-size:16.7px;font-weight:normal;color:#1d1d1d;letter-spacing:-0.33px;-webkit-text-stroke:0.25px #1d1d1d;">AFTERNOON SHIFT</div>
<div class="t c" style="left:-67.8px;top:719.1px;">1</div>
<div class="t c" style="left:-15.7px;top:719.1px;">0</div>
<div class="t c" style="left:36.4px;top:719.1px;">1</div>
<div class="t c" style="left:88.5px;top:719.1px;">0</div>
<div class="t c" style="left:140.6px;top:719.1px;">1</div>
<div class="t c" style="left:192.7px;top:719.1px;">0</div>
<div class="t c" style="left:244.8px;top:719.1px;">0</div>
<div class="t c" style="left:296.9px;top:719.1px;">0</div>
<div class="t c" style="left:349.0px;top:719.1px;">0</div>
<div class="t c" style="left:401.1px;top:719.1px;">1</div>
<div class="t c" style="left:453.1px;top:719.1px;">0</div>
<div class="t c" style="left:505.2px;top:719.1px;">0</div>
<div class="t c" style="left:557.3px;top:719.1px;">0</div>
<div class="t c" style="left:609.4px;top:719.1px;">0</div>
<div class="t c" style="left:661.5px;top:719.1px;">0</div>
<div class="t c" style="left:713.6px;top:719.1px;">0</div>
<div class="t c" style="left:765.7px;top:719.1px;">0</div>
<div class="t c" style="left:817.8px;top:719.1px;">0</div>
<div class="t c" style="left:869.9px;top:719.1px;">0</div>
<div class="t c" style="left:922.0px;top:719.1px;">0</div>
<div class="t c" style="left:974.0px;top:719.1px;">0</div>
<div class="t c" style="left:1026.1px;top:719.1px;">0</div>
<div class="t c" style="left:1078.2px;top:719.1px;">0</div>
<div class="t c" style="left:1130.3px;top:719.1px;">0</div>
<div class="t c" style="left:1182.4px;top:719.1px;">0</div>
<div class="t c" style="left:1234.5px;top:719.1px;">0</div>
<div class="t c" style="left:1286.6px;top:719.1px;">0</div>
<div class="t c" style="left:1338.7px;top:719.1px;">0</div>
<div class="t c" style="left:-67.8px;top:745.7px;">0</div>
<div class="t c" style="left:-15.7px;top:745.7px;">0</div>
<div class="t c" style="left:36.4px;top:745.7px;">0</div>
<div class="t c" style="left:88.5px;top:745.7px;">0</div>
<div class="t c" style="left:140.6px;top:745.7px;">0</div>
<div class="t c" style="left:192.7px;top:745.7px;">0</div>
<div class="t c" style="left:244.8px;top:745.7px;">0</div>
<div class="t c" style="left:296.9px;top:745.7px;">1</div>
<div class="t c" style="left:349.0px;top:745.7px;">1</div>
<div class="t c" style="left:401.1px;top:745.7px;">1</div>
<div class="t c" style="left:453.1px;top:745.7px;">1</div>
<div class="t c" style="left:505.2px;top:745.7px;">0</div>
<div class="t c" style="left:557.3px;top:745.7px;">1</div>
<div class="t c" style="left:609.4px;top:745.7px;">1</div>
<div class="t c" style="left:661.5px;top:745.7px;">0</div>
<div class="t c" style="left:713.6px;top:745.7px;">0</div>
<div class="t c" style="left:765.7px;top:745.7px;">0</div>
<div class="t c" style="left:817.8px;top:745.7px;">0</div>
<div class="t c" style="left:869.9px;top:745.7px;">0</div>
<div class="t c" style="left:922.0px;top:745.7px;">0</div>
<div class="t c" style="left:974.0px;top:745.7px;">0</div>
<div class="t c" style="left:1026.1px;top:745.7px;">0</div>
<div class="t c" style="left:1078.2px;top:745.7px;">0</div>
<div class="t c" style="left:1130.3px;top:745.7px;">0</div>
<div class="t c" style="left:1182.4px;top:745.7px;">0</div>
<div class="t c" style="left:1234.5px;top:745.7px;">0</div>
<div class="t c" style="left:1286.6px;top:745.7px;">0</div>
<div class="t c" style="left:1338.7px;top:745.7px;">0</div>
<div class="t c" style="left:-67.8px;top:772.3px;">0</div>
<div class="t c" style="left:-15.7px;top:772.3px;">0</div>
<div class="t c" style="left:36.4px;top:772.3px;">0</div>
<div class="t c" style="left:88.5px;top:772.3px;">0</div>
<div class="t c" style="left:140.6px;top:772.3px;">0</div>
<div class="t c" style="left:192.7px;top:772.3px;">0</div>
<div class="t c" style="left:244.8px;top:772.3px;">0</div>
<div class="t c" style="left:296.9px;top:772.3px;">0</div>
<div class="t c" style="left:349.0px;top:772.3px;">0</div>
<div class="t c" style="left:401.1px;top:772.3px;">0</div>
<div class="t c" style="left:453.1px;top:772.3px;">0</div>
<div class="t c" style="left:505.2px;top:772.3px;">0</div>
<div class="t c" style="left:557.3px;top:772.3px;">0</div>
<div class="t c" style="left:609.4px;top:772.3px;">0</div>
<div class="t c" style="left:661.5px;top:772.3px;">0</div>
<div class="t c" style="left:713.6px;top:772.3px;">0</div>
<div class="t c" style="left:765.7px;top:772.3px;">0</div>
<div class="t c" style="left:817.8px;top:772.3px;">0</div>
<div class="t c" style="left:869.9px;top:772.3px;">0</div>
<div class="t c" style="left:922.0px;top:772.3px;">1</div>
<div class="t c" style="left:974.0px;top:772.3px;">1</div>
<div class="t c" style="left:1026.1px;top:772.3px;">1</div>
<div class="t c" style="left:1078.2px;top:772.3px;">1</div>
<div class="t c" style="left:1130.3px;top:772.3px;">0</div>
<div class="t c" style="left:1182.4px;top:772.3px;">0</div>
<div class="t c" style="left:1234.5px;top:772.3px;">0</div>
<div class="t c" style="left:1286.6px;top:772.3px;">0</div>
<div class="t c" style="left:1338.7px;top:772.3px;">0</div>
<div class="t c" style="left:-67.8px;top:798.9px;">1</div>
<div class="t c" style="left:-15.7px;top:798.9px;">0</div>
<div class="t c" style="left:36.4px;top:798.9px;">1</div>
<div class="t c" style="left:88.5px;top:798.9px;">0</div>
<div class="t c" style="left:140.6px;top:798.9px;">1</div>
<div class="t c" style="left:192.7px;top:798.9px;">0</div>
<div class="t c" style="left:244.8px;top:798.9px;">0</div>
<div class="t c" style="left:296.9px;top:798.9px;">1</div>
<div class="t c" style="left:349.0px;top:798.9px;">1</div>
<div class="t c" style="left:401.1px;top:798.9px;">2</div>
<div class="t c" style="left:453.1px;top:798.9px;">1</div>
<div class="t c" style="left:505.2px;top:798.9px;">0</div>
<div class="t c" style="left:557.3px;top:798.9px;">1</div>
<div class="t c" style="left:609.4px;top:798.9px;">1</div>
<div class="t c" style="left:661.5px;top:798.9px;">0</div>
<div class="t c" style="left:713.6px;top:798.9px;">0</div>
<div class="t c" style="left:765.7px;top:798.9px;">0</div>
<div class="t c" style="left:817.8px;top:798.9px;">0</div>
<div class="t c" style="left:869.9px;top:798.9px;">0</div>
<div class="t c" style="left:922.0px;top:798.9px;">1</div>
<div class="t c" style="left:974.0px;top:798.9px;">1</div>
<div class="t c" style="left:1026.1px;top:798.9px;">1</div>
<div class="t c" style="left:1078.2px;top:798.9px;">1</div>
<div class="t c" style="left:1130.3px;top:798.9px;">0</div>
<div class="t c" style="left:1182.4px;top:798.9px;">0</div>
<div class="t c" style="left:1234.5px;top:798.9px;">0</div>
<div class="t c" style="left:1286.6px;top:798.9px;">0</div>
<div class="t c" style="left:1338.7px;top:798.9px;">0</div>
<div style="left:685.2px;top:877.3px;height:24px;line-height:24px;white-space:pre;font-size:16.7px;font-weight:normal;color:#1d1d1d;letter-spacing:-0.38px;-webkit-text-stroke:0.25px #1d1d1d;">NIGHT SHIFT</div>
<div class="t c" style="left:-67.8px;top:906.0px;">0</div>
<div class="t c" style="left:-15.7px;top:906.0px;">0</div>
<div class="t c" style="left:36.4px;top:906.0px;">0</div>
<div class="t c" style="left:88.5px;top:906.0px;">0</div>
<div class="t c" style="left:140.6px;top:906.0px;">1</div>
<div class="t c" style="left:192.7px;top:906.0px;">0</div>
<div class="t c" style="left:244.8px;top:906.0px;">0</div>
<div class="t c" style="left:296.9px;top:906.0px;">0</div>
<div class="t c" style="left:349.0px;top:906.0px;">0</div>
<div class="t c" style="left:401.1px;top:906.0px;">0</div>
<div class="t c" style="left:453.1px;top:906.0px;">0</div>
<div class="t c" style="left:505.2px;top:906.0px;">1</div>
<div class="t c" style="left:557.3px;top:906.0px;">0</div>
<div class="t c" style="left:609.4px;top:906.0px;">0</div>
<div class="t c" style="left:661.5px;top:906.0px;">0</div>
<div class="t c" style="left:713.6px;top:906.0px;">1</div>
<div class="t c" style="left:765.7px;top:906.0px;">1</div>
<div class="t c" style="left:817.8px;top:906.0px;">0</div>
<div class="t c" style="left:869.9px;top:906.0px;">0</div>
<div class="t c" style="left:922.0px;top:906.0px;">0</div>
<div class="t c" style="left:974.0px;top:906.0px;">0</div>
<div class="t c" style="left:1026.1px;top:906.0px;">0</div>
<div class="t c" style="left:1078.2px;top:906.0px;">0</div>
<div class="t c" style="left:1130.3px;top:906.0px;">0</div>
<div class="t c" style="left:1182.4px;top:906.0px;">0</div>
<div class="t c" style="left:1234.5px;top:906.0px;">0</div>
<div class="t c" style="left:1286.6px;top:906.0px;">0</div>
<div class="t c" style="left:1338.7px;top:906.0px;">0</div>
<div class="t c" style="left:-67.8px;top:932.6px;">0</div>
<div class="t c" style="left:-15.7px;top:932.6px;">0</div>
<div class="t c" style="left:36.4px;top:932.6px;">0</div>
<div class="t c" style="left:88.5px;top:932.6px;">0</div>
<div class="t c" style="left:140.6px;top:932.6px;">0</div>
<div class="t c" style="left:192.7px;top:932.6px;">0</div>
<div class="t c" style="left:244.8px;top:932.6px;">0</div>
<div class="t c" style="left:296.9px;top:932.6px;">0</div>
<div class="t c" style="left:349.0px;top:932.6px;">0</div>
<div class="t c" style="left:401.1px;top:932.6px;">0</div>
<div class="t c" style="left:453.1px;top:932.6px;">0</div>
<div class="t c" style="left:505.2px;top:932.6px;">0</div>
<div class="t c" style="left:557.3px;top:932.6px;">0</div>
<div class="t c" style="left:609.4px;top:932.6px;">0</div>
<div class="t c" style="left:661.5px;top:932.6px;">0</div>
<div class="t c" style="left:713.6px;top:932.6px;">1</div>
<div class="t c" style="left:765.7px;top:932.6px;">1</div>
<div class="t c" style="left:817.8px;top:932.6px;">1</div>
<div class="t c" style="left:869.9px;top:932.6px;">1</div>
<div class="t c" style="left:922.0px;top:932.6px;">1</div>
<div class="t c" style="left:974.0px;top:932.6px;">1</div>
<div class="t c" style="left:1026.1px;top:932.6px;">1</div>
<div class="t c" style="left:1078.2px;top:932.6px;">0</div>
<div class="t c" style="left:1130.3px;top:932.6px;">1</div>
<div class="t c" style="left:1182.4px;top:932.6px;">0</div>
<div class="t c" style="left:1234.5px;top:932.6px;">0</div>
<div class="t c" style="left:1286.6px;top:932.6px;">0</div>
<div class="t c" style="left:1338.7px;top:932.6px;">0</div>
<div class="t c" style="left:-67.8px;top:959.2px;">0</div>
<div class="t c" style="left:-15.7px;top:959.2px;">0</div>
<div class="t c" style="left:36.4px;top:959.2px;">0</div>
<div class="t c" style="left:88.5px;top:959.2px;">0</div>
<div class="t c" style="left:140.6px;top:959.2px;">0</div>
<div class="t c" style="left:192.7px;top:959.2px;">0</div>
<div class="t c" style="left:244.8px;top:959.2px;">0</div>
<div class="t c" style="left:296.9px;top:959.2px;">0</div>
<div class="t c" style="left:349.0px;top:959.2px;">0</div>
<div class="t c" style="left:401.1px;top:959.2px;">0</div>
<div class="t c" style="left:453.1px;top:959.2px;">2</div>
<div class="t c" style="left:505.2px;top:959.2px;">3</div>
<div class="t c" style="left:557.3px;top:959.2px;">2</div>
<div class="t c" style="left:609.4px;top:959.2px;">1</div>
<div class="t c" style="left:661.5px;top:959.2px;">1</div>
<div class="t c" style="left:713.6px;top:959.2px;">1</div>
<div class="t c" style="left:765.7px;top:959.2px;">0</div>
<div class="t c" style="left:817.8px;top:959.2px;">0</div>
<div class="t c" style="left:869.9px;top:959.2px;">0</div>
<div class="t c" style="left:922.0px;top:959.2px;">0</div>
<div class="t c" style="left:974.0px;top:959.2px;">0</div>
<div class="t c" style="left:1026.1px;top:959.2px;">1</div>
<div class="t c" style="left:1078.2px;top:959.2px;">0</div>
<div class="t c" style="left:1130.3px;top:959.2px;">2</div>
<div class="t c" style="left:1182.4px;top:959.2px;">1</div>
<div class="t c" style="left:1234.5px;top:959.2px;">1</div>
<div class="t c" style="left:1286.6px;top:959.2px;">0</div>
<div class="t c" style="left:1338.7px;top:959.2px;">0</div>
<div class="t c" style="left:-67.8px;top:985.8px;">0</div>
<div class="t c" style="left:-15.7px;top:985.8px;">0</div>
<div class="t c" style="left:36.4px;top:985.8px;">0</div>
<div class="t c" style="left:88.5px;top:985.8px;">0</div>
<div class="t c" style="left:140.6px;top:985.8px;">1</div>
<div class="t c" style="left:192.7px;top:985.8px;">0</div>
<div class="t c" style="left:244.8px;top:985.8px;">0</div>
<div class="t c" style="left:296.9px;top:985.8px;">0</div>
<div class="t c" style="left:349.0px;top:985.8px;">0</div>
<div class="t c" style="left:401.1px;top:985.8px;">0</div>
<div class="t c" style="left:453.1px;top:985.8px;">2</div>
<div class="t c" style="left:505.2px;top:985.8px;">4</div>
<div class="t c" style="left:557.3px;top:985.8px;">2</div>
<div class="t c" style="left:609.4px;top:985.8px;">1</div>
<div class="t c" style="left:661.5px;top:985.8px;">1</div>
<div class="t c" style="left:713.6px;top:985.8px;">3</div>
<div class="t c" style="left:765.7px;top:985.8px;">2</div>
<div class="t c" style="left:817.8px;top:985.8px;">1</div>
<div class="t c" style="left:869.9px;top:985.8px;">1</div>
<div class="t c" style="left:922.0px;top:985.8px;">1</div>
<div class="t c" style="left:974.0px;top:985.8px;">1</div>
<div class="t c" style="left:1026.1px;top:985.8px;">2</div>
<div class="t c" style="left:1078.2px;top:985.8px;">0</div>
<div class="t c" style="left:1130.3px;top:985.8px;">3</div>
<div class="t c" style="left:1182.4px;top:985.8px;">1</div>
<div class="t c" style="left:1234.5px;top:985.8px;">1</div>
<div class="t c" style="left:1286.6px;top:985.8px;">0</div>
<div class="t c" style="left:1338.7px;top:985.8px;">0</div>
<div style="left:1529.0px;top:503.3px;height:24px;line-height:24px;white-space:pre;font-size:17.2px;font-weight:bold;color:#111;letter-spacing:0.36px;">Morning</div>
<div style="left:1669.2px;top:504.9px;height:24px;line-height:24px;white-space:pre;font-size:17.2px;font-weight:bold;color:#111;letter-spacing:-0.40px;">Code</div>
<div style="left:1776.6px;top:503.3px;height:24px;line-height:24px;white-space:pre;font-size:17.2px;font-weight:bold;color:#111;letter-spacing:0.06px;">Time</div>
<div style="left:1891.1px;top:504.9px;height:24px;line-height:24px;white-space:pre;font-size:17.2px;font-weight:bold;color:#111;letter-spacing:-1.36px;">Hrs</div>
<div class="t c" style="left:1590.2px;top:532.3px;">A</div>
<div class="t c" style="left:1590.2px;top:558.9px;">AA</div>
<div class="t c" style="left:1803.8px;top:532.3px;">8.0</div>
<div style="left:1522.2px;top:690.1px;height:24px;line-height:24px;white-space:pre;font-size:17.2px;font-weight:bold;color:#111;letter-spacing:0.33px;">Afternoon</div>
<div style="left:1669.2px;top:691.7px;height:24px;line-height:24px;white-space:pre;font-size:17.2px;font-weight:bold;color:#111;letter-spacing:-0.40px;">Code</div>
<div style="left:1776.6px;top:690.1px;height:24px;line-height:24px;white-space:pre;font-size:17.2px;font-weight:bold;color:#111;letter-spacing:0.06px;">Time</div>
<div style="left:1891.1px;top:691.7px;height:24px;line-height:24px;white-space:pre;font-size:17.2px;font-weight:bold;color:#111;letter-spacing:-1.36px;">Hrs</div>
<div class="t c" style="left:1590.2px;top:719.1px;">P</div>
<div class="t c" style="left:1803.8px;top:719.1px;">8.0</div>
<div style="left:1542.9px;top:877.0px;height:24px;line-height:24px;white-space:pre;font-size:17.2px;font-weight:bold;color:#111;letter-spacing:0.06px;">Night</div>
<div style="left:1669.2px;top:878.6px;height:24px;line-height:24px;white-space:pre;font-size:17.2px;font-weight:bold;color:#111;letter-spacing:-0.40px;">Code</div>
<div style="left:1776.6px;top:877.0px;height:24px;line-height:24px;white-space:pre;font-size:17.2px;font-weight:bold;color:#111;letter-spacing:0.06px;">Time</div>
<div style="left:1891.1px;top:878.6px;height:24px;line-height:24px;white-space:pre;font-size:17.2px;font-weight:bold;color:#111;letter-spacing:-1.36px;">Hrs</div>
<div class="t c" style="left:1590.2px;top:906.0px;">N</div>
<div class="t c" style="left:1590.2px;top:932.6px;">S</div>
<div class="t c" style="left:1590.2px;top:959.2px;">SS</div>
<div class="t c" style="left:1803.8px;top:906.0px;">10.0</div>
<div style="left:1501.3px;top:1063.9px;height:24px;line-height:24px;white-space:pre;font-size:17.2px;font-weight:bold;color:#111;letter-spacing:0.08px;">Non productive</div>
<div style="left:1669.2px;top:1065.5px;height:24px;line-height:24px;white-space:pre;font-size:17.2px;font-weight:bold;color:#111;letter-spacing:-0.40px;">Code</div>
<div style="left:1776.6px;top:1063.9px;height:24px;line-height:24px;white-space:pre;font-size:17.2px;font-weight:bold;color:#111;letter-spacing:0.06px;">Time</div>
<div style="left:1891.1px;top:1065.5px;height:24px;line-height:24px;white-space:pre;font-size:17.2px;font-weight:bold;color:#111;letter-spacing:-1.36px;">Hrs</div>
<div class="t b" style="left:1590.2px;top:1093.5px;">RD</div>
<div class="t s" style="left:1464.6px;top:1092.5px;">ROSTER DAY OFF</div>
<div class="t b" style="left:1590.2px;top:1120.1px;">AL</div>
<div class="t s" style="left:1464.6px;top:1119.1px;">ANNUAL LEAVE</div>
<div class="t b" style="left:1590.2px;top:1146.7px;">ML</div>
<div class="t s" style="left:1464.6px;top:1145.7px;">MAT LEAVE</div>
<div class="t s" style="left:1464.6px;top:1172.3px;">LONG SERVICE LEAVE</div>
<div class="t s" style="left:1464.6px;top:1198.9px;">EDUCATION LEAVE</div>
<div class="t c" style="left:1803.8px;top:1092.9px;">8.0</div>
<!-- ============ SHEET TABS / SCROLLBAR / STATUS ============ -->
<div style="left:0;top:1312px;width:1946px;height:38.5px;background:#e6e6e6;border-top:1.4px solid #a6a6a6"></div>
<div style="left:0;top:1350.5px;width:1946px;height:29.5px;background:#f3f3f3;border-top:1.2px solid #d6d6d6"></div>
<div style="left:0;top:1378.3px;width:1946px;height:1.7px;background:#3d4a63"></div>
<div style="left:1939.5px;top:1351.5px;width:6.5px;height:27px;background:#c9c9c9"></div>
<!-- yellow tabs -->
<div style="left:-4px;top:1316px;width:119.500px;height:29px;background:#ffff00"></div>
<div style="left:122.6px;top:1316px;width:172.4px;height:29px;background:#ffff00"></div>
<div style="left:301.5px;top:1316px;width:75.800px;height:29px;background:#ffff00"></div>
<i style="left:118.4px;top:1317px;width:1.4px;height:26px;background:#ababab"></i>
<i style="left:297.4px;top:1317px;width:1.4px;height:26px;background:#ababab"></i>
<!-- active tab -->
<div style="left:379.500px;top:1311.5px;width:131px;height:34px;background:#fff;border-right:1.4px solid #a6a6a6;border-bottom:3px solid #217346"></div>
<div style="left:-0.6px;top:1317.8px;height:24px;line-height:24px;white-space:pre;font-size:16.3px;font-weight:normal;color:#2a2a10;letter-spacing:0.08px;">emplate V3.2</div>
<div style="left:139.2px;top:1317.8px;height:24px;line-height:24px;white-space:pre;font-size:16.3px;font-weight:normal;color:#2a2a10;letter-spacing:0.57px;">Protected Version</div>
<div style="left:315.5px;top:1317.8px;height:24px;line-height:24px;white-space:pre;font-size:16.3px;font-weight:normal;color:#2a2a10;letter-spacing:0.59px;">Demo</div>
<div style="left:395.7px;top:1317.8px;height:24px;line-height:24px;white-space:pre;font-size:16.3px;font-weight:bold;color:#217346;letter-spacing:0.47px;">roster demo</div>
<svg width="24" height="24" viewBox="0 0 24 24" style="left:553.5px;top:1318.5px" fill="none" stroke="#6a6a6a" stroke-width="1.5"><circle cx="12" cy="12" r="9.8"/><path d="M6.800 12h10.400M12 6.800v10.400" stroke-width="1.800"/></svg>
<!-- scrollbar -->
<svg width="4" height="16" style="left:1314px;top:1322.5px" fill="#9a9a9a"><rect x="1" y="1" width="2" height="2"/><rect x="1" y="6.500" width="2" height="2"/><rect x="1" y="12" width="2" height="2"/></svg>
<div style="left:1357px;top:1321.500px;width:83px;height:19.500px;background:#f3f3f3"></div>
<div style="left:1337.5px;top:1321.500px;width:20px;height:19.500px;background:#fff;border:1.2px solid #8e8e8e"></div>
<svg width="8" height="10" style="left:1343.5px;top:1326.300px"><path d="M7 0.300v9.400l-6.200-4.700z" fill="#1d1d1d"/></svg>
<div style="left:1439.500px;top:1321.500px;width:520px;height:19.500px;background:#fff;border:1.4px solid #a0a0a0"></div>
<div style="left:-0.4px;top:1352.6px;height:24px;line-height:24px;white-space:pre;font-size:14.4px;font-weight:bold;color:#3c3c3c;letter-spacing:-0.16px;">ty: Investigate</div>

</body></html>
